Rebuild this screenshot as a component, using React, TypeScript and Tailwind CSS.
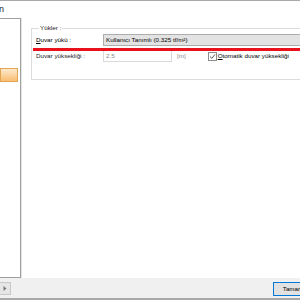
export default function App() {
  return (
    <div
      className="relative w-[300px] h-[300px] overflow-hidden bg-white flex flex-col text-black"
      style={{ fontFamily: '"Liberation Sans", Arial, sans-serif' }}
    >
      {/* Title bar */}
      <div className="h-[18px] border-t border-[#a9a9a9] flex items-start">
        <span className="text-[9px] leading-[9px] mt-[4px] -ml-[1px] text-[#1a1a1a]">n</span>
      </div>

      {/* Main */}
      <div className="flex h-[260px]">
        {/* Left tree panel */}
        <div className="w-[21px] border-t border-b border-r border-[#a0a0a0] pt-[49px] pr-[2px] shrink-0">
          <div className="h-[14px] border border-[#e3a550] bg-gradient-to-b from-[#fde9cc] to-[#f8bd70]" />
        </div>
        <div className="w-[1px] bg-[#e3e3e3] shrink-0" />

        {/* Content */}
        <div className="flex-1 pl-[9px] pt-[6px]">
          <fieldset className="w-[300px] h-[56px] border border-r-0 border-[#dcdcdc] pl-[4px] pt-[2px]">
            <legend className="text-[6.25px] leading-[8px] ml-[3px] px-[1px] text-[#222]">Yükler :</legend>

            <div className="flex items-center h-[12px]">
              <span className="w-[67px] shrink-0 text-[6.25px] leading-[8px]">
                <span className="underline">D</span>uvar yükü :
              </span>
              <div className="flex-1 h-[12px] bg-[#e3e3e3] border border-[#adadad] flex items-center pl-[2px]">
                <span className="text-[6.25px] leading-[8px]">Kullanıcı Tanımlı (0.325 tf/m²)</span>
              </div>
            </div>

            <div className="flex items-center h-[12px] mt-[4px]">
              <span className="w-[67px] shrink-0 text-[6.25px] leading-[8px] text-[#222]">Duvar yüksekliği :</span>
              <div className="w-[69px] h-[12px] bg-white border border-[#d9d9d9] flex items-center pl-[2px]">
                <span className="text-[6.25px] leading-[8px] text-[#8a8a8a]">2.5</span>
              </div>
              <span className="ml-[5px] text-[6.25px] leading-[8px] text-[#8a8a8a]">[m]</span>
              <div className="ml-[22px] w-[9px] h-[9px] border border-[#8c8c8c] bg-white flex items-center justify-center">
                <svg width="7" height="7" viewBox="0 0 7 7">
                  <path d="M1 3.6 L2.8 5.3 L6 1.4" fill="none" stroke="#5a5a5a" strokeWidth="1" />
                </svg>
              </div>
              <span className="ml-[1px] text-[6.25px] leading-[8px]">
                <span className="underline">O</span>tomatik duvar yüksekliği
              </span>
            </div>
          </fieldset>
        </div>
      </div>

      {/* Bottom bar */}
      <div className="h-[22px] bg-[#f0f0f0] border-b-2 border-[#a8a8a8] flex items-start justify-between pt-[4px]">
        <button className="w-[12px] h-[13px] border border-[#c8c8c8] bg-[#e6e6e6] flex items-center justify-center -ml-[1px]">
          <svg width="4" height="5" viewBox="0 0 4 5">
            <path d="M0.5 0 L3.5 2.5 L0.5 5 Z" fill="#7a7a7a" />
          </svg>
        </button>
        <button className="w-[40px] h-[14px] border border-[#0078d7] bg-[#e1e1e1] -mr-[13px] flex items-center justify-center">
          <span className="text-[6.25px] leading-[8px]">Tamam</span>
        </button>
      </div>

      {/* Red annotation line */}
      <div className="absolute left-[33px] right-0 top-[48px] h-[2.5px] bg-[#e8111c]" />
    </div>
  );
}
